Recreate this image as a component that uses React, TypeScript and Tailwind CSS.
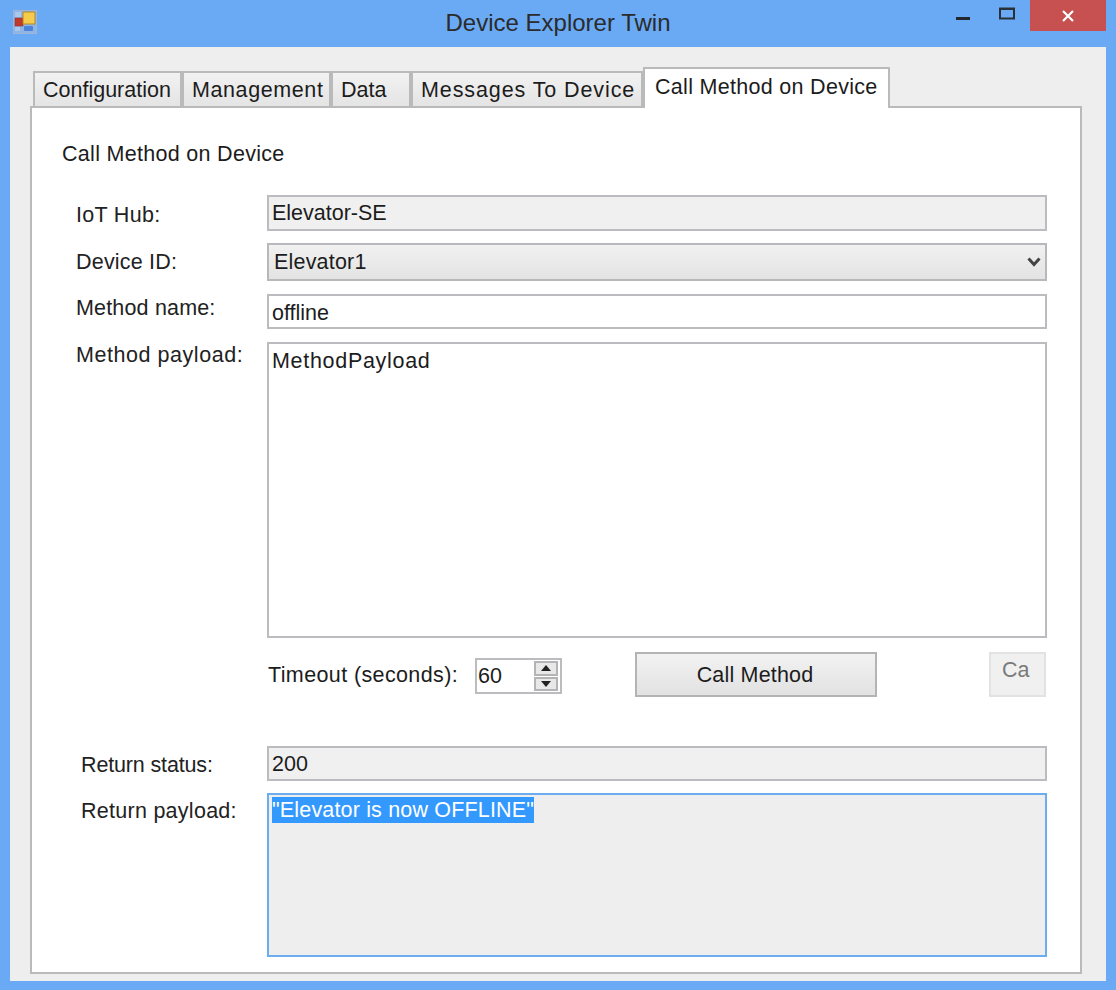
import type { ReactNode } from "react"

const tabs = [
  { name: "Configuration", width: "w-[149px]", spacing: "" },
  { name: "Management", width: "w-[149px]", spacing: "tracking-[0.6px]" },
  { name: "Data", width: "w-[80px]", spacing: "" },
  { name: "Messages To Device", width: "w-[232px]", spacing: "tracking-[0.9px]" },
]

function AppIcon() {
  return (
    <svg width="24" height="24" viewBox="0 0 24 24" className="ml-[13px] mt-[10px]">
      <rect x="0.5" y="0.5" width="23" height="23" fill="#8fb4e6" stroke="#9db6d8" />
      <rect x="2" y="2" width="6" height="5" fill="#a9c8ee" />
      <rect x="2" y="17" width="5" height="4" fill="#a9c8ee" />
      <rect x="2" y="8" width="8" height="8" fill="#c0392b" stroke="#8f2a20" strokeWidth="0.5" />
      <rect x="10" y="2" width="12" height="12" fill="#f6cb4b" stroke="#b18a24" />
      <rect x="11" y="16" width="9" height="5" rx="1" fill="#4b83d8" />
    </svg>
  )
}

function WindowControls() {
  return (
    <div className="flex items-start justify-end pr-[10px]">
      <svg width="16" height="24" viewBox="0 0 16 24" className="mr-[28px]">
        <rect x="1" y="17" width="14" height="3" fill="#23272e" />
      </svg>
      <svg width="17" height="24" viewBox="0 0 17 24" className="mr-[14px]">
        <rect x="1" y="8.5" width="14" height="10" fill="none" stroke="#2a3038" strokeWidth="2" />
        <rect x="1" y="8" width="14" height="2" fill="#2a3038" />
      </svg>
      <div className="flex h-[31px] w-[76px] items-center justify-center bg-[#c75050]">
        <svg width="14" height="14" viewBox="0 0 14 14">
          <path d="M2 2 L12 12 M12 2 L2 12" stroke="#ffffff" strokeWidth="2.2" />
        </svg>
      </div>
    </div>
  )
}

function Label({ children, className }: { children: ReactNode; className: string }) {
  return <div className={`w-[205px] shrink-0 text-[#222] ${className}`}>{children}</div>
}

function Spinner() {
  return (
    <div className="flex h-[36px] w-[87px] items-center border-2 border-[#bcbcc0] bg-white pl-[1px] pr-[2px]">
      <span className="flex-1">60</span>
      <div className="flex h-[30px] w-[24px] flex-col gap-[1px]">
        <div className="flex flex-1 items-center justify-center border-2 border-[#b4b4b4] bg-[#e8e8e8]">
          <svg width="10" height="6" viewBox="0 0 10 6">
            <path d="M5 0 L10 6 L0 6 Z" fill="#222" />
          </svg>
        </div>
        <div className="flex flex-1 items-center justify-center border-2 border-[#b4b4b4] bg-[#e8e8e8]">
          <svg width="10" height="6" viewBox="0 0 10 6">
            <path d="M0 0 L10 0 L5 6 Z" fill="#222" />
          </svg>
        </div>
      </div>
    </div>
  )
}

export default function App() {
  return (
    <div className="flex h-[990px] w-[1116px] flex-col bg-[#6aaaf5] font-['Liberation_Sans',Arial,sans-serif] text-[21.5px] leading-[26px] text-[#1c1c1c]">
      <div className="grid h-[47px] shrink-0 grid-cols-[1fr_auto_1fr]">
        <AppIcon />
        <div className="pt-[10px] text-[24px] text-[#2b2b2b]">Device Explorer Twin</div>
        <WindowControls />
      </div>

      <div className="mx-[10px] mb-[9px] flex flex-1 flex-col bg-[#eeeeee] pb-[7px] pl-[20px] pr-[24px] pt-[20px]">
        <div className="flex items-end pl-[3px]">
          {tabs.map((tab) => (
            <div
              key={tab.name}
              className={`flex h-[35px] ${tab.width} ${tab.spacing} items-center border-2 border-b-0 border-[#bababa] bg-gradient-to-b from-[#f2f2f2] to-[#e4e4e4] pl-[8px]`}
            >
              {tab.name}
            </div>
          ))}
          <div className="relative z-10 -mb-[2px] flex h-[41px] w-[247px] items-start border-2 border-b-0 border-[#bababa] bg-white pl-[10px] pt-[5px] tracking-[0.3px]">
            Call Method on Device
          </div>
        </div>

        <div className="flex flex-1 flex-col border-2 border-[#bababa] bg-white pl-[30px] pr-[33px] pt-[33px]">
          <div className="mb-[28px] h-[26px] tracking-[0.3px]">Call Method on Device</div>

          <div className="flex h-[36px] items-center">
            <Label className="pl-[14px] pt-[4px] tracking-[0.3px]">IoT Hub:</Label>
            <div className="flex h-full flex-1 items-center border-2 border-[#bcbcc0] bg-[#f0f0f0] pl-[3px]">Elevator-SE</div>
          </div>

          <div className="mt-[12px] flex h-[38px] items-center">
            <Label className="pl-[14px] tracking-[0.2px]">Device ID:</Label>
            <div className="flex h-full flex-1 items-center justify-between border-2 border-[#b8b8bc] bg-gradient-to-b from-[#f1f1f1] to-[#e3e3e3] pl-[5px] pr-[4px]">
              <span className="tracking-[0.2px]">Elevator1</span>
              <svg width="14" height="10" viewBox="0 0 14 10">
                <path d="M1.5 1.5 L7 7.5 L12.5 1.5" fill="none" stroke="#444" strokeWidth="3" />
              </svg>
            </div>
          </div>

          <div className="mt-[13px] flex h-[35px] items-center">
            <Label className="pb-[8px] pl-[14px] tracking-[0.17px]">Method name:</Label>
            <div className="flex h-full flex-1 items-center border-2 border-[#bcbcc0] bg-white pl-[3px] pt-[2px]">offline</div>
          </div>

          <div className="mt-[13px] flex h-[296px] items-start">
            <Label className="pl-[14px] tracking-[0.55px]">Method payload:</Label>
            <div className="h-full flex-1 border-2 border-[#bcbcc0] bg-white pl-[3px] pt-[4px] tracking-[0.7px]">MethodPayload</div>
          </div>

          <div className="mt-[14px] flex h-[45px] items-start">
            <div className="ml-[206px] w-[207px] shrink-0 pt-[10px] tracking-[0.38px]">Timeout (seconds):</div>
            <div className="mt-[6px]">
              <Spinner />
            </div>
            <div className="ml-[73px] flex h-[45px] w-[242px] items-center justify-center border-2 border-[#b4b4b4] bg-gradient-to-b from-[#f2f2f2] to-[#e2e2e2] pr-[2px] tracking-[0.18px]">
              Call Method
            </div>
            <div className="ml-[112px] flex h-[45px] w-[57px] items-start border-2 border-[#e2e2e2] bg-[#f0f0f0] pl-[11px] pt-[3px] text-[#7a7a7a]">
              Ca
            </div>
          </div>

          <div className="mt-[49px] flex h-[35px] items-center">
            <Label className="pl-[19px] pt-[2px] tracking-[-0.15px]">Return status:</Label>
            <div className="flex h-full flex-1 items-center border-2 border-[#bcbcc0] bg-[#f0f0f0] pl-[3px] pt-[1px]">200</div>
          </div>

          <div className="mt-[12px] flex h-[164px] items-start">
            <Label className="pl-[19px] pt-[5px] tracking-[0.27px]">Return payload:</Label>
            <div className="h-full flex-1 border-2 border-[#6cadf0] bg-[#eeeeee] pl-[3px] pt-[2px]">
              <span className="inline-block bg-[#3399ff] tracking-[0.17px] text-white">"Elevator is now OFFLINE"</span>
            </div>
          </div>
        </div>
      </div>
    </div>
  )
}
